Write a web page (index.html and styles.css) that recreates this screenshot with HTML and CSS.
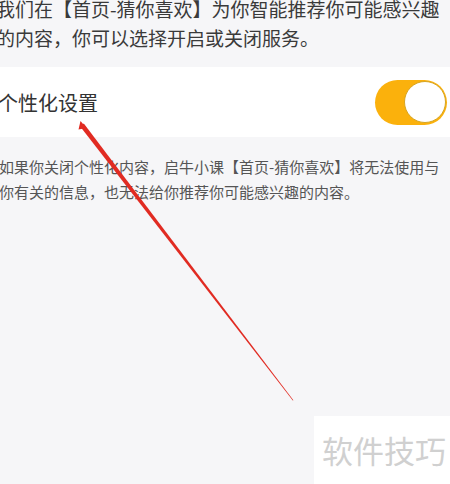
FILE: index.html
```html
<!DOCTYPE html>
<html lang="zh-CN">
<head>
  <meta charset="UTF-8">
  <meta name="viewport" content="width=device-width, initial-scale=1.0">
  <title>个性化设置</title>
  <link rel="stylesheet" href="styles.css">
</head>
<body>
  <div class="screen">
    <!-- intro text, scrolled partly out of view -->
    <div class="intro">
      <p>我们在【首页-猜你喜欢】为你智能推荐你可能感兴趣<br>的内容，你可以选择开启或关闭服务。</p>
    </div>

    <div class="setting-row">
      <span class="setting-label">个性化设置</span>
      <div class="toggle on">
        <div class="knob"></div>
      </div>
    </div>

    <p class="note">如果你关闭个性化内容，启牛小课【首页-猜你喜欢】将无法使用与<br>你有关的信息，也无法给你推荐你可能感兴趣的内容。</p>

    <!-- red annotation arrow drawn over the screenshot -->
    <svg class="annotation" width="450" height="484" viewBox="0 0 450 484">
      <polygon points="80.2,126.4 83.8,123.6 293.4,400.3 292.8,400.5" fill="#e12b22"/>
      <polygon points="80.5,121 86.5,128 78.5,129.5" fill="#e12b22"/>
    </svg>

    <div class="watermark">软件技巧</div>
  </div>
</body>
</html>
```

FILE: styles.css
```css
html, body {
  margin: 0;
  padding: 0;
}

body {
  background: #f6f6f8;
  font-family: "Noto Sans CJK SC", "Noto Sans", sans-serif;
  color: #333;
}

.screen {
  position: relative;
  width: 450px;
  height: 484px;
  overflow: hidden;
}

.intro {
  height: 67px;
  overflow: hidden;
}

.intro p {
  margin: -6px 0 0 -4px;
  font-size: 19px;
  line-height: 29px;
  white-space: nowrap;
  color: #3a3a3a;
}

.setting-row {
  display: flex;
  align-items: center;
  justify-content: space-between;
  height: 70px;
  background: #fff;
  padding: 0 3px 0 0;
}

.setting-label {
  font-size: 20px;
  color: #333;
  margin-left: -2px;
}

.toggle {
  position: relative;
  width: 72px;
  height: 45px;
  border-radius: 23px;
  background: #e5e5ea;
}

.toggle.on {
  background: #fbb10c;
}

.toggle .knob {
  position: absolute;
  top: 1px;
  right: 1px;
  width: 40px;
  height: 40px;
  border-radius: 50%;
  background: #fff;
  border: 1.5px solid #d7a522;
}

.note {
  margin: 17px 0 0 -1px;
  font-size: 15px;
  line-height: 25px;
  color: #555;
  white-space: nowrap;
}

.annotation {
  position: absolute;
  left: 0;
  top: 0;
}

.watermark {
  position: absolute;
  right: 0;
  bottom: 0;
  width: 128px;
  height: 68px;
  padding-left: 8px;
  background: #fff;
  color: #d0d0d0;
  font-size: 31px;
  line-height: 68px;
  white-space: nowrap;
}
```
